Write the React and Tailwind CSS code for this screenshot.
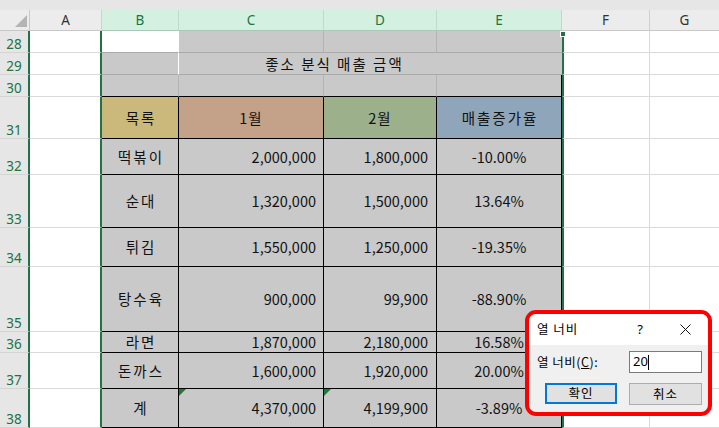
import React from "react";

const F = "font-['Noto_Sans_CJK_KR','Noto_Sans',sans-serif]";

const rows = [
  { n: 32, b: "떡볶이", c: "2,000,000", d: "1,800,000", e: "-10.00%" },
  { n: 33, b: "순대", c: "1,320,000", d: "1,500,000", e: "13.64%" },
  { n: 34, b: "튀김", c: "1,550,000", d: "1,250,000", e: "-19.35%" },
  { n: 35, b: "탕수육", c: "900,000", d: "99,900", e: "-88.90%" },
  { n: 36, b: "라면", c: "1,870,000", d: "2,180,000", e: "16.58%" },
  { n: 37, b: "돈까스", c: "1,600,000", d: "1,920,000", e: "20.00%" },
  { n: 38, b: "계", c: "4,370,000", d: "4,199,900", e: "-3.89%", tri: true },
];

const rowHead =
  "flex items-end justify-center pb-[1px] bg-[#e6e6e6] text-[#217346] text-[13.5px] leading-none font-['Noto_Sans',sans-serif] border-b border-b-[#d4d4d4] border-r-2 border-r-[#217346]";
const colA = "bg-white border-b border-b-[#dadada] border-r-2 border-r-[#217346]";
const colF = "bg-white border-l-2 border-l-[#217346] border-r border-r-[#dadada] border-b border-b-[#dadada]";
const colG = "bg-white border-b border-b-[#dadada]";
const grey = "bg-[#c9c9c9]";
const dataCell = "bg-[#c9c9c9] border-r border-b border-black flex items-center text-[14.5px] text-[#111]";

function Tri() {
  return (
    <svg className="absolute left-0 top-0" width="7" height="7" viewBox="0 0 7 7">
      <polygon points="0,0 7,0 0,7" fill="#1e7a3c" />
    </svg>
  );
}

export default function App() {
  return (
    <div className={`relative w-[719px] h-[428px] overflow-hidden bg-white ${F}`}>
      <div className="h-[10px] bg-[#e6e6e6]" />
      <div className="grid grid-cols-[30px_72px_77px_145px_113px_125px_88px_69px] grid-rows-[21px_22px_22px_22px_42px_36px_53px_39px_65px_21px_36px_39px]">
        {/* header row */}
        <div className="relative bg-[#ececec] border-r border-b border-[#c8c8c8]">
          <svg className="absolute left-0 top-0" width="30" height="21" viewBox="0 0 30 21">
            <polygon points="27,5 27,17 15,17" fill="#b4b4b4" />
          </svg>
        </div>
        <div className="flex items-center justify-center bg-[#ececec] text-[#333] text-[13.5px] font-['Noto_Sans',sans-serif] border-r border-r-[#d0d0d0] border-b border-b-[#c8c8c8]">A</div>
        {["B", "C", "D", "E"].map((l) => (
          <div key={l} className="flex items-center justify-center bg-[#d3f0e0] text-[#217346] text-[13.5px] font-['Noto_Sans',sans-serif] border-r border-r-[#bcdcc9] border-b border-b-[#a9c9b6]">{l}</div>
        ))}
        <div className="flex items-center justify-center bg-[#ececec] text-[#333] text-[13.5px] font-['Noto_Sans',sans-serif] border-r border-r-[#d0d0d0] border-b border-b-[#c8c8c8]">F</div>
        <div className="flex items-center justify-center bg-[#ececec] text-[#333] text-[13.5px] font-['Noto_Sans',sans-serif] border-b border-b-[#c8c8c8]">G</div>

        {/* row 28 */}
        <div className={rowHead}>28</div>
        <div className={colA} />
        <div className="bg-white border-b border-b-[#a9a9a9] border-r border-r-white" />
        <div className={`${grey} border-r border-r-[#b3b3b3] border-b border-b-[#a9a9a9]`} />
        <div className={`${grey} border-r border-r-[#b3b3b3] border-b border-b-[#a9a9a9]`} />
        <div className={`${grey} border-b border-b-[#a9a9a9]`} />
        <div className={colF} />
        <div className={colG} />

        {/* row 29 */}
        <div className={rowHead}>29</div>
        <div className={colA} />
        <div className={`${grey} border-r border-r-white border-b border-b-[#a9a9a9]`} />
        <div className={`${grey} col-span-3 border-b border-b-[#a9a9a9] flex items-center justify-center pr-[72px] text-[14.5px] tracking-[2px] text-[#111] whitespace-nowrap`}>
          좋소 분식 매출 금액
        </div>
        <div className={colF} />
        <div className={colG} />

        {/* row 30 */}
        <div className={rowHead}>30</div>
        <div className={colA} />
        <div className={`${grey} border-r border-r-[#b3b3b3] border-b border-b-black`} />
        <div className={`${grey} border-r border-r-[#b3b3b3] border-b border-b-black`} />
        <div className={`${grey} border-r border-r-[#b3b3b3] border-b border-b-black`} />
        <div className={`${grey} border-r border-r-black border-b border-b-black`} />
        <div className={colF} />
        <div className={colG} />

        {/* row 31 */}
        <div className={rowHead}>31</div>
        <div className={colA} />
        <div className="bg-[#cbb97b] border-r border-b border-black flex items-center justify-center text-[14.5px] tracking-[2px] pl-[2px] text-[#111]">목록</div>
        <div className="bg-[#c4a189] border-r border-b border-black flex items-center justify-center text-[14.5px] tracking-[1px] text-[#111]">1월</div>
        <div className="bg-[#9cb08b] border-r border-b border-black flex items-center justify-center text-[14.5px] tracking-[1px] text-[#111]">2월</div>
        <div className="bg-[#8fa5b9] border-r border-b border-black flex items-center justify-center text-[14.5px] tracking-[2px] pl-[2px] text-[#111]">매출증가율</div>
        <div className={colF} />
        <div className={colG} />

        {rows.map((r) => (
          <React.Fragment key={r.n}>
            <div className={rowHead}>{r.n}</div>
            <div className={colA} />
            <div className={`${dataCell} justify-center tracking-[2px] pl-[2px]`}>{r.b}</div>
            <div className={`${dataCell} relative justify-end pr-[7px]`}>
              {r.tri && <Tri />}
              {r.c}
            </div>
            <div className={`${dataCell} relative justify-end pr-[8px]`}>
              {r.tri && <Tri />}
              {r.d}
            </div>
            <div className={`${dataCell} justify-center`}>{r.e}</div>
            <div className={colF} />
            <div className={colG} />
          </React.Fragment>
        ))}
      </div>

      {/* fill handle */}
      <div className="absolute left-[560px] top-[31px] w-[6px] h-[6px] bg-[#217346] border border-white" />

      {/* dialog */}
      <div className="absolute left-[525px] top-[310px] w-[187px] h-[106px] rounded-[11px] border-4 border-[#ff0000] overflow-hidden bg-[#f0f0f0] flex flex-col text-black">
        <div className="h-[31px] bg-white flex items-center pl-[8px] text-[12.5px]">
          <span className="w-[95px] tracking-[1px]">열 너비</span>
          <span className="w-[16px] text-center font-['Noto_Sans',sans-serif] text-[13px]">?</span>
          <span className="w-[14px]" />
          <span className="w-[46px] flex justify-center">
            <svg width="11" height="11" viewBox="0 0 11 11">
              <path d="M0.5 0.5 L10.5 10.5 M10.5 0.5 L0.5 10.5" stroke="#111" strokeWidth="1" />
            </svg>
          </span>
        </div>
        <div className="flex-1 flex flex-col">
          <div className="mt-[6px] h-[22px] flex items-center">
            <span className="w-[100px] pl-[8px] text-[12.5px] tracking-[0.5px] whitespace-nowrap">
              열 너비(<span className="underline">C</span>):
            </span>
            <div className="w-[73px] h-[22px] border border-[#7a7a7a] bg-white flex items-center pl-[3px] text-[13px] font-['Noto_Sans',sans-serif]">
              <span>20</span>
              <span className="w-[1px] h-[15px] bg-black" />
            </div>
          </div>
          <div className="mt-[10px] flex items-start">
            <div className="ml-[16px] w-[72px] h-[21px] border-2 border-[#0078d7] bg-[#e1e1e1] flex items-center justify-center text-[12.5px] tracking-[1px]">확인</div>
            <div className="ml-[12px] w-[73px] h-[22px] border border-[#adadad] bg-[#e1e1e1] flex items-center justify-center text-[12.5px] tracking-[1px]">취소</div>
          </div>
        </div>
      </div>
    </div>
  );
}
